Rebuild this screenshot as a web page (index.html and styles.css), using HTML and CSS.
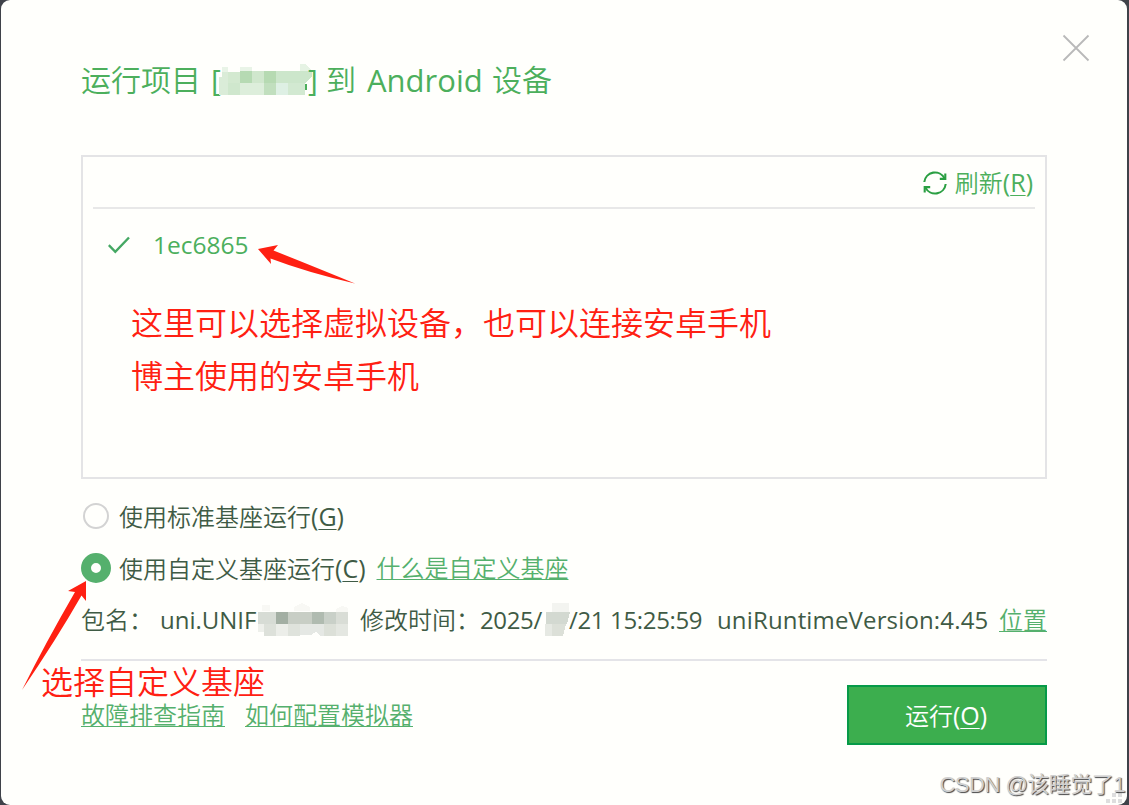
FILE: index.html
```html
<!DOCTYPE html>
<html lang="zh-CN">
  <head>
    <meta charset="UTF-8" />
    <meta name="viewport" content="width=device-width, initial-scale=1.0" />
    <title>运行到 Android 设备</title>
    <link rel="stylesheet" href="styles.css">
  </head>
  <body>
    <div class="dialog">
      <svg class="close" width="28" height="28" viewBox="0 0 28 28">
        <path d="M1.5 1.5L26.5 26.5M26.5 1.5L1.5 26.5" stroke="#b9b9b9" stroke-width="1.8" fill="none" />
      </svg>
      <h1 class="title">
        <span class="t-cjk">运行项目</span><span class="t-open">[</span>
        <svg class="t-mask" width="96" height="32" viewBox="0 0 96 32" shape-rendering="crispEdges">
          <path d="M3 3h6v5H3zM21 3h12v5H21z" fill="#e9f4e7" />
          <path d="M3 8h18v12h-18zM0 13h9v18H0z" fill="#daecd8" />
          <rect x="9" y="8" width="12" height="12" fill="#d3e9d0" />
          <rect x="21" y="7" width="12" height="12" fill="#b6dab3" />
          <rect x="33" y="7" width="12" height="12" fill="#d0e7cd" />
          <rect x="45" y="7" width="12" height="12" fill="#b6dab2" />
          <path d="M57 7h36v5l-6 7H57z" fill="#cce6cb" />
          <path d="M81 0h5l7 7H81z" fill="#e6f3e4" />
          <rect x="9" y="19" width="12" height="12" fill="#cfe7cd" />
          <rect x="21" y="19" width="24" height="12" fill="#ddeedb" />
          <rect x="45" y="19" width="12" height="12" fill="#c1dfbe" />
          <rect x="57" y="19" width="12" height="12" fill="#def0e4" />
          <rect x="69" y="19" width="17" height="12" fill="#d2e9d1" />
          <rect x="86" y="20" width="2" height="6" fill="#4caf5c" />
        </svg>
        <span class="t-close">]</span><span class="t-to">到</span><span class="t-name">Android</span><span>设备</span>
      </h1>

      <div class="devices">
        <div class="toolbar">
          <svg width="24" height="24" viewBox="0 0 24 24" fill="none" stroke="#2a9f42" stroke-width="2.1">
            <path d="M1.3 11A10.7 10.7 0 0 1 21.5 7.4M22.7 13A10.7 10.7 0 0 1 2.5 16.6" />
            <path d="M22.3 2.6V7.9H16.8M1.7 21.4V16.1H7.2" />
          </svg>
          <span class="refresh">刷新<i>(<u>R</u>)</i></span>
        </div>
        <div class="device">
          <svg width="22" height="18" viewBox="0 0 22 18" fill="none" stroke="#45a863" stroke-width="2.4">
            <path d="M.8 9.2L7.3 15.8L21 1.5" />
          </svg>
          <span class="device-id">1ec6865</span>
        </div>
      </div>

      <div class="option">
        <span class="radio"></span>
        <span>使用标准基座运行<i>(<u>G</u>)</i></span>
      </div>
      <div class="option">
        <span class="radio checked"></span>
        <span>使用自定义基座运行<i>(<u>C</u>)</i></span>
        <a class="link what">什么是自定义基座</a>
      </div>

      <div class="info">
        <span>包名：</span>
        <span class="latin">uni.UNIF</span>
        <svg width="102" height="34" viewBox="0 0 102 34" shape-rendering="crispEdges">
          <path d="M4 2h8v6H4zM36 4l8-4 8 4v4H36zM78 6l6-3 6 2v4H78z" fill="#f8f8f4" />
          <rect x="0" y="9" width="18" height="12" fill="#d7dcd5" />
          <rect x="18" y="9" width="12" height="12" fill="#a3afa3" />
          <rect x="30" y="9" width="24" height="12" fill="#c8cec5" />
          <rect x="54" y="9" width="12" height="12" fill="#b0bbb0" />
          <rect x="66" y="9" width="12" height="12" fill="#c9d0c8" />
          <rect x="78" y="9" width="12" height="12" fill="#d9ddd6" />
          <rect x="0" y="21" width="6" height="8" fill="#eef0eb" />
          <rect x="6" y="21" width="12" height="12" fill="#dde1da" />
          <rect x="18" y="21" width="12" height="12" fill="#eceee9" />
          <rect x="30" y="21" width="12" height="12" fill="#dfe3dc" />
          <path d="M42 21h24v12h-4l-4-4-5 3h-11z" fill="#e5e8e4" />
          <rect x="66" y="21" width="12" height="12" fill="#dce0d8" />
          <rect x="78" y="21" width="12" height="12" fill="#e4e7e1" />
        </svg>
        <span>修改时间：</span>
        <span class="latin date">2025/</span>
        <svg width="26" height="34" viewBox="0 0 26 34" shape-rendering="crispEdges">
          <path d="M7 0h17v9H7z" fill="#f3f4f0" />
          <path d="M1 9h24l-3 12H1z" fill="#d3d9d1" />
          <path d="M0 21h7v12H0z" fill="#e6e9e3" />
          <path d="M7 21h14l-3 12H7z" fill="#dce0d8" />
        </svg>
        <span class="latin date time">/21 15:25:59</span>
        <span class="latin version">uniRuntimeVersion:4.45</span>
        <a class="link">位置</a>
      </div>

      <div class="footer">
        <div class="help">
          <a class="link">故障排查指南</a>
          <a class="link">如何配置模拟器</a>
        </div>
        <button class="run">运行<i>(<u>O</u>)</i></button>
      </div>

      <svg class="grip" width="18" height="12" viewBox="0 0 18 12" fill="#dedede" shape-rendering="crispEdges">
        <path d="M0 6h4v4H0zM6 6h4v4H6zM12 6h4v4h-4zM6 0h4v4H6zM12 0h4v4h-4z" />
      </svg>
    </div>

    <!-- hand-drawn notes on top of the dialog -->
    <svg class="arrow arrow-device" width="98" height="42" viewBox="0 0 98 42">
      <path d="M0 6L20 2L15.500 7.500Q52 22 97 40.500Q48 29 12.500 15.500L13 21Z" fill="#ff2012" />
    </svg>
    <p class="note note-device">这里可以选择虚拟设备，也可以连接安卓手机<br />博主使用的安卓手机</p>
    <svg class="arrow arrow-base" width="66" height="112" viewBox="0 0 66 112">
      <path d="M64 1V21L59.500 15.500Q34 60 0 110Q24 62 53 12L46 11Z" fill="#ff2012" />
    </svg>
    <p class="note note-base">选择自定义基座</p>
    <div class="watermark">CSDN @该睡觉了1</div>
  </body>
</html>
```

FILE: styles.css
```css
* {
  box-sizing: border-box;
}
body {
  margin: 0;
  height: 805px;
  overflow: hidden;
  position: relative;
  background: #3f4249;
  font-family: "Open Sans", "Noto Sans CJK SC", sans-serif;
  font-size: 24px;
  color: #3f5b45;
}
i {
  font-style: normal;
  font-size: 25px;
  font-weight: 400;
}
u {
  text-decoration-thickness: 1px;
  text-underline-offset: 3px;
}
svg {
  display: block;
  flex: none;
}
.dialog {
  position: relative;
  height: 805px;
  margin: 0 2px 0 1px;
  padding: 60px 80px 0;
  border-radius: 9px;
  background: #fffffc;
  font-weight: 350;
  white-space: nowrap;
}
.close {
  position: absolute;
  top: 34px;
  right: 37px;
}
.title {
  display: flex;
  align-items: center;
  height: 40px;
  margin: 0 0 55px;
  font-size: 30px;
  font-weight: 350;
  line-height: 40px;
  color: #4caf5c;
}
.t-cjk {
  width: 130px;
}
.t-open {
  width: 8px;
  font-weight: 400;
}
.t-close {
  width: 18px;
  margin-left: -7px;
  font-weight: 400;
}
.t-to {
  width: 41px;
}
.t-name {
  width: 125px;
  font-size: 31px;
  font-weight: 400;
}
.devices {
  height: 324px;
  padding: 0 10px;
  border: 2px solid #e4e4e6;
}
.toolbar {
  display: flex;
  align-items: center;
  justify-content: flex-end;
  gap: 8px;
  height: 52px;
  padding: 1px 2px 0 0;
  border-bottom: 2px solid #e8e8e8;
  color: #4caf5c;
}
.refresh {
  line-height: 49px;
}
.device {
  display: flex;
  align-items: center;
  height: 71px;
  padding-left: 15px;
  gap: 23px;
  font-size: 24.500px;
  font-weight: 400;
  color: #4caf5c;
}
.option {
  display: flex;
  align-items: center;
  height: 52px;
  line-height: 52px;
}
.devices + .option {
  margin-top: 11px;
}
.radio {
  width: 26px;
  height: 26px;
  margin: 0 10px 0 2px;
  border: 2px solid #d3d3d3;
  border-radius: 50%;
}
.radio.checked {
  width: 30px;
  height: 30px;
  margin: 0 8px 0 0;
  border: 10.5px solid #55b06d;
}
.link {
  color: #55b06d;
  text-decoration: underline;
  text-decoration-thickness: 1px;
  text-underline-offset: 2px;
}
.what {
  margin-left: 11px;
}
.info {
  display: grid;
  grid-template-columns: 79px 98px 102px 120px 65px 26px 146px 282px 48px;
  align-items: center;
  height: 52px;
  line-height: 52px;
}
.latin {
  font-size: 24px;
  font-weight: 400;
}
.version {
  letter-spacing: 0.15px;
}
.date {
  letter-spacing: -0.35px;
}
.time {
  margin-left: -2px;
}
.footer {
  display: flex;
  justify-content: space-between;
  margin-top: 13px;
  padding-top: 24px;
  border-top: 2px solid #e4e4e8;
}
.help {
  display: flex;
  gap: 20px;
  height: 60px;
  line-height: 60px;
}
.run {
  width: 200px;
  height: 60px;
  padding: 0 2px 2px 0;
  border: 2px solid #069a48;
  background: #3cae4e;
  color: #fff;
  font: inherit;
}
.grip {
  position: absolute;
  right: 3px;
  bottom: 0;
}
.arrow {
  position: absolute;
}
.arrow-device {
  left: 258px;
  top: 243px;
}
.arrow-base {
  left: 22px;
  top: 580px;
}
.note {
  position: absolute;
  margin: 0;
  font-size: 32px;
  font-weight: 350;
  line-height: 53px;
  color: #ff2012;
  white-space: nowrap;
}
.note-device {
  left: 131px;
  top: 296px;
}
.note-base {
  left: 41px;
  top: 669px;
  line-height: 26px;
}
.watermark {
  position: absolute;
  right: 4px;
  top: 770px;
  font-family: "Liberation Sans", "Noto Sans CJK SC", sans-serif;
  font-size: 22px;
  line-height: 30px;
  letter-spacing: -0.5px;
  color: #d0d0d0;
  text-shadow: 1px 1px 1px #444;
  white-space: nowrap;
}
```
